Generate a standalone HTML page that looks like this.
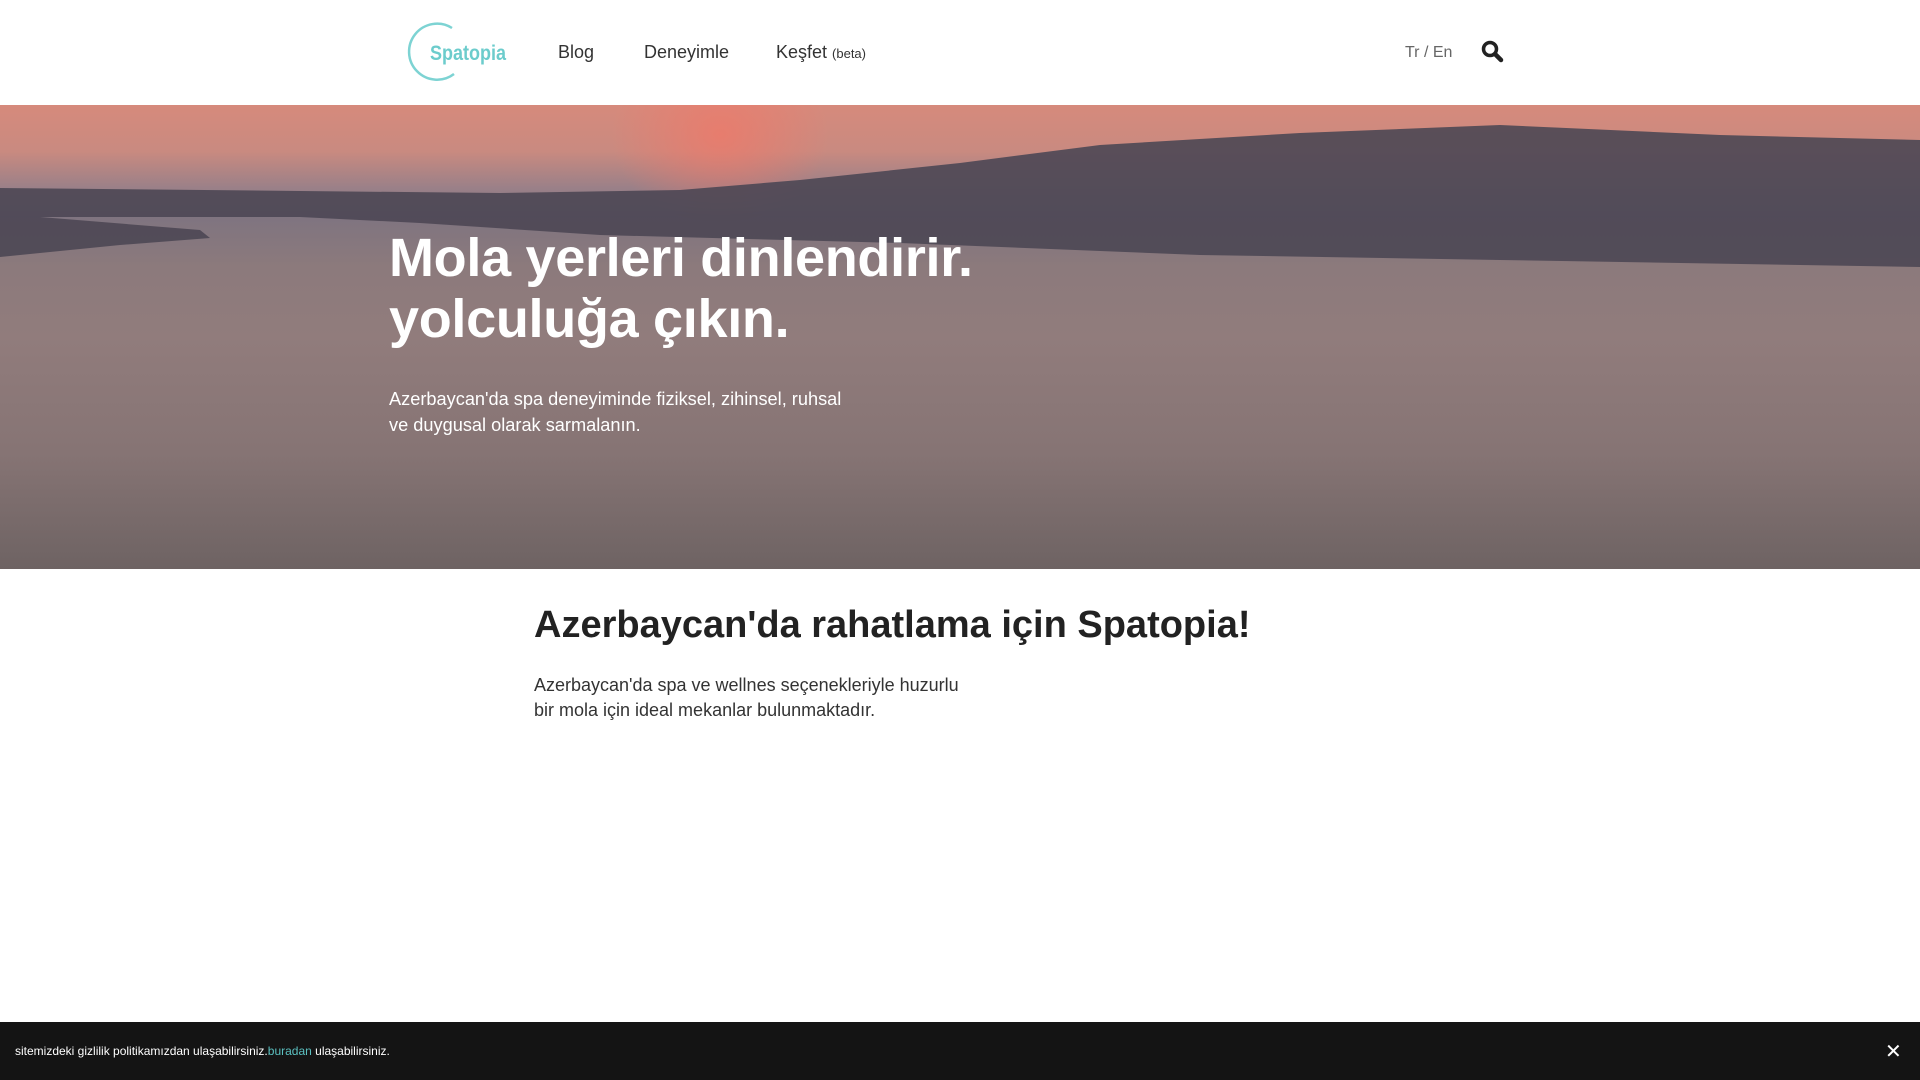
<!DOCTYPE html>
<html><head><meta charset="utf-8"><style>
*{margin:0;padding:0;box-sizing:border-box}
body{width:1920px;height:1080px;overflow:hidden;background:#fff;font-family:"Liberation Sans",sans-serif;position:relative}
.abs{position:absolute;white-space:nowrap}
.nav{font-size:18px;color:#333;top:42px}
.hero{position:absolute;left:0;top:105px;width:1920px;height:464px;overflow:hidden;
background:linear-gradient(180deg,#d68a7c 0%,#c98a80 10%,#9a8088 18%,#7f7480 24%,#8c7a7c 35%,#917c7c 50%,#867474 75%,#6e6363 100%)}
</style></head><body>
<svg class="abs" style="left:392px;top:20px" width="120" height="66" viewBox="0 0 120 66">
<path d="M60 8 A28 28 0 1 0 62 54" fill="none" stroke="#7dd3d3" stroke-width="2.5"/>
<text x="38" y="40" font-family="Liberation Sans,sans-serif" font-size="21" fill="#6ccccc" font-weight="bold" textLength="76" lengthAdjust="spacingAndGlyphs">Spatopia</text>
</svg>
<div class="abs nav" style="left:558px">Blog</div>
<div class="abs nav" style="left:644px">Deneyimle</div>
<div class="abs nav" style="left:776px">Keşfet <span style="font-size:13px">(beta)</span></div>
<div class="abs" style="left:1405px;top:44px;font-size:16px;color:#666">Tr / En</div>
<svg class="abs" style="left:1480px;top:39px" width="24" height="24" viewBox="0 0 24 24"><circle cx="10" cy="10" r="6.5" fill="none" stroke="#222" stroke-width="3.5"/><path d="M15 15 L21 21" stroke="#222" stroke-width="4.5" stroke-linecap="round"/></svg>
<div class="hero">
<div style="position:absolute;left:610px;top:-60px;width:220px;height:180px;border-radius:50%;background:radial-gradient(#f07868,transparent 70%);opacity:.75"></div>
<svg style="position:absolute;left:0;top:0" width="1920" height="464"><path d="M0 83 L500 88 L680 85 L800 75 L960 58 L1100 40 L1300 28 L1500 20 L1720 30 L1920 35 L1920 162 L1500 155 L1200 150 L900 138 L600 130 L420 118 L300 112 L100 112 L40 112 L200 125 L210 133 L120 140 L0 152 Z" fill="#4c4754" opacity=".9"/></svg>
<div class="abs" style="left:389px;top:123px;color:#fff;font-size:54px;font-weight:bold;line-height:61px;letter-spacing:-.3px">Mola yerleri dinlendirir.<br>yolculuğa çıkın.</div>
<div class="abs" style="left:389px;top:281px;color:#fff;font-size:18.2px;line-height:26px">Azerbaycan'da spa deneyiminde fiziksel, zihinsel, ruhsal<br>ve duygusal olarak sarmalanın.</div>
</div>
<div class="abs" style="left:534px;top:604px;font-size:38px;font-weight:bold;color:#222">Azerbaycan'da rahatlama için Spatopia!</div>
<div class="abs" style="left:534px;top:673px;font-size:18px;line-height:25px;color:#333">Azerbaycan'da spa ve wellnes seçenekleriyle huzurlu<br>bir mola için ideal mekanlar bulunmaktadır.</div>
<div style="position:absolute;left:0;top:1022px;width:1920px;height:58px;background:#141414"></div>
<div class="abs" style="left:15px;top:1044px;font-size:12px;color:#fff">sitemizdeki gizlilik politikamızdan ulaşabilirsiniz.<span style="color:#5bc0c0">buradan</span> ulaşabilirsiniz.</div>
<div class="abs" style="left:1885px;top:1039px;font-size:20px;color:#fff">✕</div>
</body></html>
